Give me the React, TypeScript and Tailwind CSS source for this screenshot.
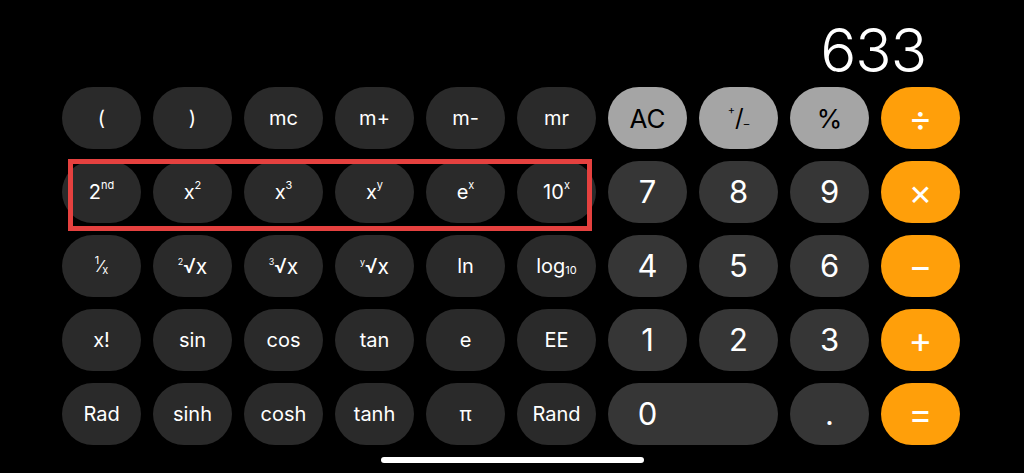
import React from "react"

type Kind = "fn" | "num" | "gray" | "op"

const kindClass: Record<Kind, string> = {
    fn: "bg-[#2a2a2a] text-white text-[20px]",
    num: "bg-[#363636] text-white text-[31px]",
    gray: "bg-[#a5a5a5] text-black text-[26px]",
    op: "bg-[#ff9f0a] text-white text-[36px]",
}

const Key = ({ kind, children, wide }: { kind: Kind; children: React.ReactNode; wide?: boolean }) => (
    <button
        className={`h-[62px] rounded-full flex items-center ${wide ? "col-span-2 justify-start" : "justify-center"} ${kindClass[kind]}`}
    >
        {wide ? <span className="w-[79px] text-center">{children}</span> : children}
    </button>
)

const Hi = ({ children }: { children: React.ReactNode }) => (
    <span className="text-[11px] leading-none self-start">{children}</span>
)

const Lo = ({ children }: { children: React.ReactNode }) => (
    <span className="text-[11px] leading-none self-end mb-[1px]">{children}</span>
)

const Pow = ({ base, exp }: { base: string; exp: string }) => (
    <span className="inline-flex items-center h-[24px] leading-none">
        <span>{base}</span>
        <Hi>{exp}</Hi>
    </span>
)

const Root = ({ n }: { n: string }) => (
    <span className="inline-flex items-center h-[24px] leading-none">
        <span className="text-[9px] self-start mt-[3px]">{n}</span>
        <span className="text-[20px]">√</span>
        <span className="text-[21px]">x</span>
    </span>
)

export default function App() {
    return (
        <div className="w-[1024px] h-[473px] bg-black relative overflow-hidden" style={{ fontFamily: "Inter, 'Liberation Sans', sans-serif" }}>
            <div className="ml-[62px] w-[898px]">
                <div className="h-[87px] flex items-end justify-end pr-[34px] pb-[7px]">
                    <span className="text-white text-[60px] font-light leading-none tracking-[-1px]">633</span>
                </div>

                <div className="grid grid-cols-10 gap-x-[12px] gap-y-[12px]">
                    {/* row 1 */}
                    <Key kind="fn">(</Key>
                    <Key kind="fn">)</Key>
                    <Key kind="fn">mc</Key>
                    <Key kind="fn">m+</Key>
                    <Key kind="fn">m-</Key>
                    <Key kind="fn">mr</Key>
                    <Key kind="gray">AC</Key>
                    <Key kind="gray">
                        <span className="inline-flex items-center h-[26px] leading-none">
                            <Hi>+</Hi>
                            <span className="text-[24px]">/</span>
                            <Lo>–</Lo>
                        </span>
                    </Key>
                    <Key kind="gray">%</Key>
                    <Key kind="op">÷</Key>

                    {/* row 2 */}
                    <Key kind="fn"><Pow base="2" exp="nd" /></Key>
                    <Key kind="fn"><Pow base="x" exp="2" /></Key>
                    <Key kind="fn"><Pow base="x" exp="3" /></Key>
                    <Key kind="fn"><Pow base="x" exp="y" /></Key>
                    <Key kind="fn"><Pow base="e" exp="x" /></Key>
                    <Key kind="fn"><Pow base="10" exp="x" /></Key>
                    <Key kind="num">7</Key>
                    <Key kind="num">8</Key>
                    <Key kind="num">9</Key>
                    <Key kind="op">×</Key>

                    {/* row 3 */}
                    <Key kind="fn">
                        <span className="inline-flex items-center h-[22px] leading-none">
                            <Hi>1</Hi>
                            <span className="text-[16px]">⁄</span>
                            <Lo>x</Lo>
                        </span>
                    </Key>
                    <Key kind="fn"><Root n="2" /></Key>
                    <Key kind="fn"><Root n="3" /></Key>
                    <Key kind="fn"><Root n="y" /></Key>
                    <Key kind="fn">ln</Key>
                    <Key kind="fn">
                        <span className="inline-flex items-center h-[22px] leading-none">
                            <span>log</span>
                            <Lo>10</Lo>
                        </span>
                    </Key>
                    <Key kind="num">4</Key>
                    <Key kind="num">5</Key>
                    <Key kind="num">6</Key>
                    <Key kind="op">−</Key>

                    {/* row 4 */}
                    <Key kind="fn">x!</Key>
                    <Key kind="fn">sin</Key>
                    <Key kind="fn">cos</Key>
                    <Key kind="fn">tan</Key>
                    <Key kind="fn">e</Key>
                    <Key kind="fn">EE</Key>
                    <Key kind="num">1</Key>
                    <Key kind="num">2</Key>
                    <Key kind="num">3</Key>
                    <Key kind="op">+</Key>

                    {/* row 5 */}
                    <Key kind="fn">Rad</Key>
                    <Key kind="fn">sinh</Key>
                    <Key kind="fn">cosh</Key>
                    <Key kind="fn">tanh</Key>
                    <Key kind="fn">π</Key>
                    <Key kind="fn">Rand</Key>
                    <Key kind="num" wide>0</Key>
                    <Key kind="num">.</Key>
                    <Key kind="op">=</Key>
                </div>
            </div>

            <div className="mt-[12px] mx-auto w-[263px] h-[6px] rounded-full bg-white" />

            {/* highlight box drawn over the second row */}
            <div className="absolute left-[68px] top-[159px] w-[524px] h-[72px] border-[5px] border-[#e5413f]" />
        </div>
    )
}
